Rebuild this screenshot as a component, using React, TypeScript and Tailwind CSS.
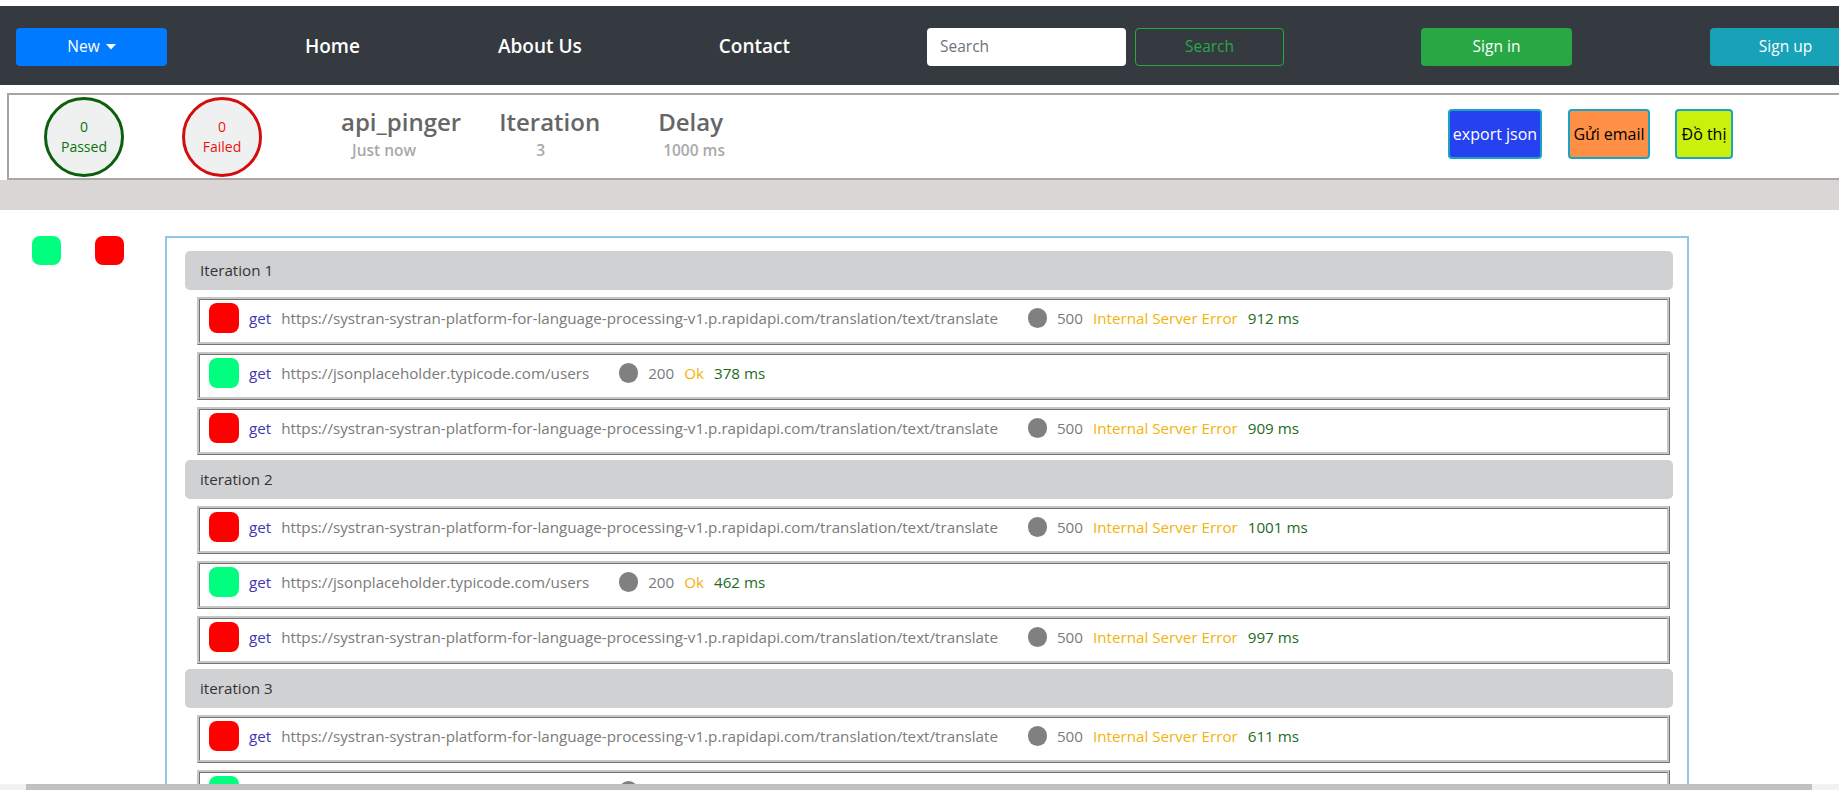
import React from "react";

type Row = { ok: boolean; url: string; code: string; msg: string; ms: string };

const SYS = "https://systran-systran-platform-for-language-processing-v1.p.rapidapi.com/translation/text/translate";
const JSONP = "https://jsonplaceholder.typicode.com/users";

const iterations: { title: string; rows: Row[] }[] = [
  {
    title: "Iteration 1",
    rows: [
      { ok: false, url: SYS, code: "500", msg: "Internal Server Error", ms: "912 ms" },
      { ok: true, url: JSONP, code: "200", msg: "Ok", ms: "378 ms" },
      { ok: false, url: SYS, code: "500", msg: "Internal Server Error", ms: "909 ms" },
    ],
  },
  {
    title: "iteration 2",
    rows: [
      { ok: false, url: SYS, code: "500", msg: "Internal Server Error", ms: "1001 ms" },
      { ok: true, url: JSONP, code: "200", msg: "Ok", ms: "462 ms" },
      { ok: false, url: SYS, code: "500", msg: "Internal Server Error", ms: "997 ms" },
    ],
  },
  {
    title: "iteration 3",
    rows: [
      { ok: false, url: SYS, code: "500", msg: "Internal Server Error", ms: "611 ms" },
      { ok: true, url: JSONP, code: "200", msg: "Ok", ms: "401 ms" },
    ],
  },
];

function ResultRow({ r }: { r: Row }) {
  return (
    <div className="ml-[12px] mr-[3px] mt-[7px] h-[48px] border-[3px] [border-style:ridge] border-[#c9c5c5] flex items-start pl-[9px] pt-[3px]">
      <div className="flex items-center h-[30px] text-[15.2px] whitespace-nowrap">
        <div className={`w-[30px] h-[30px] rounded-[8px] ${r.ok ? "bg-[#00ff7f]" : "bg-[#ff0000]"}`} />
        <span className="ml-[10px] text-[#4236b4]">get</span>
        <span className="ml-[10px] text-[#7a7a7a]">{r.url}</span>
        <span className="ml-[30px] w-[19px] h-[20px] rounded-full bg-[#808080] inline-block" />
        <span className="ml-[10px] text-[#7a7a7a]">{r.code}</span>
        <span className="ml-[10px] text-[#f2b30c]">{r.msg}</span>
        <span className="ml-[10px] text-[#1d6b1d]">{r.ms}</span>
      </div>
    </div>
  );
}

export default function App() {
  return (
    <div
      className="relative w-[1839px] h-[790px] overflow-hidden bg-white"
      style={{ fontFamily: '"Open Sans", "Noto Sans", sans-serif' }}
    >
      {/* Navbar */}
      <div className="mt-[6px] h-[79px] pt-[2px] bg-[#343a40] flex items-center w-[1900px]">
        <div className="w-[927px] flex items-center shrink-0">
          <button className="ml-[16px] w-[151px] h-[38px] rounded-[4px] bg-[#007bff] text-white text-[15.5px] flex items-center justify-center gap-[6px]">
            New
            <svg width="10" height="6" viewBox="0 0 10 6">
              <path d="M0 0 L10 0 L5 5.5 Z" fill="white" />
            </svg>
          </button>
          <a className="ml-[138px] text-white text-[19px] font-semibold">Home</a>
          <a className="ml-[138px] text-white text-[19px] font-semibold">About Us</a>
          <a className="ml-[137px] text-white text-[19px] font-semibold">Contact</a>
        </div>
        <div className="w-[199px] h-[38px] rounded-[4px] bg-white flex items-center pl-[13px] text-[15.5px] text-[#6c757d] shrink-0">
          Search
        </div>
        <button className="ml-[9px] w-[149px] h-[38px] rounded-[4px] border border-[#28a745] text-[#28a745] text-[15.5px] shrink-0">
          Search
        </button>
        <button className="ml-[137px] w-[151px] h-[38px] rounded-[4px] bg-[#28a745] text-white text-[15.5px] shrink-0">
          Sign in
        </button>
        <button className="ml-[138px] w-[151px] h-[38px] rounded-[4px] bg-[#17a2b8] text-white text-[15.5px] shrink-0">
          Sign up
        </button>
      </div>

      {/* Summary card */}
      <div className="relative mt-[8px] ml-[7px] w-[1900px] h-[87px] border-2 border-[#a6a6a6] flex items-center">
        <div className="ml-[35px] w-[80px] h-[80px] rounded-full border-[3px] border-[#0b5f0b] bg-[#eef1f0] flex flex-col items-center justify-center text-[#0b730b] text-[14px] font-medium leading-[20px]">
          <span>0</span>
          <span>Passed</span>
        </div>
        <div className="ml-[58px] w-[80px] h-[80px] rounded-full border-[3px] border-[#d40c0c] bg-[#eef1f0] flex flex-col items-center justify-center text-[#ee1111] text-[14px] font-medium leading-[20px]">
          <span>0</span>
          <span>Failed</span>
        </div>
        <div className="self-start mt-[11px] ml-[79px] flex flex-col">
          <span className="text-[24px] leading-[32px] font-semibold text-[#666]">api_pinger</span>
          <span className="ml-[11px] mt-[1px] text-[15.5px] font-semibold text-[#a9a9a9]">Just now</span>
        </div>
        <div className="self-start mt-[11px] ml-[38px] flex flex-col">
          <span className="text-[24px] leading-[32px] font-semibold text-[#666]">Iteration</span>
          <span className="ml-[37px] mt-[1px] text-[15.5px] font-semibold text-[#a9a9a9]">3</span>
        </div>
        <div className="self-start mt-[11px] ml-[58px] flex flex-col">
          <span className="text-[24px] leading-[32px] font-semibold text-[#666]">Delay</span>
          <span className="ml-[5px] mt-[1px] text-[15.5px] font-semibold text-[#a9a9a9]">1000 ms</span>
        </div>

        <div className="absolute top-[14px] left-[1439px] flex gap-[26px]">
          <button className="w-[94px] h-[50px] rounded-[4px] border-2 border-[#1ba3c6] bg-[#2541f0] text-white text-[16px]">
            export json
          </button>
          <button className="w-[82px] h-[50px] rounded-[4px] border-2 border-[#1ba3c6] bg-[#ff8f45] text-black text-[16px]">
            Gửi email
          </button>
          <button className="ml-[-1px] w-[58px] h-[50px] rounded-[4px] border-2 border-[#1ba3c6] bg-[#c9f10b] text-black text-[16px]">
            Đồ thị
          </button>
        </div>
      </div>

      {/* Gray band */}
      <div className="h-[30px] bg-[#dad6d6]" />

      {/* Results */}
      <div className="flex pt-[26px]">
        <div className="w-[165px] shrink-0 flex">
          <div className="ml-[32px] w-[29px] h-[29px] rounded-[8px] bg-[#00ff7f]" />
          <div className="ml-[34px] w-[29px] h-[29px] rounded-[8px] bg-[#ff0000]" />
        </div>
        <div className="w-[1524px] h-[600px] border-2 border-[#93c5e6] pl-[18px] pr-[14px] pt-[13px]">
          {iterations.map((it, i) => (
            <div key={i}>
              <div
                className={`${i === 0 ? "" : "mt-[5px]"} h-[39px] rounded-[5px] bg-[#d0d1d3] flex items-center pl-[15px] text-[15.2px] text-[#333]`}
              >
                {it.title}
              </div>
              {it.rows.map((r, j) => (
                <ResultRow key={j} r={r} />
              ))}
            </div>
          ))}
        </div>
      </div>

      {/* Horizontal scrollbar */}
      <div className="absolute left-0 bottom-0 w-full h-[6px] bg-[#f1f1f1]">
        <div className="absolute left-[26px] w-[1786px] h-full bg-[#c1c1c1]" />
      </div>
    </div>
  );
}
